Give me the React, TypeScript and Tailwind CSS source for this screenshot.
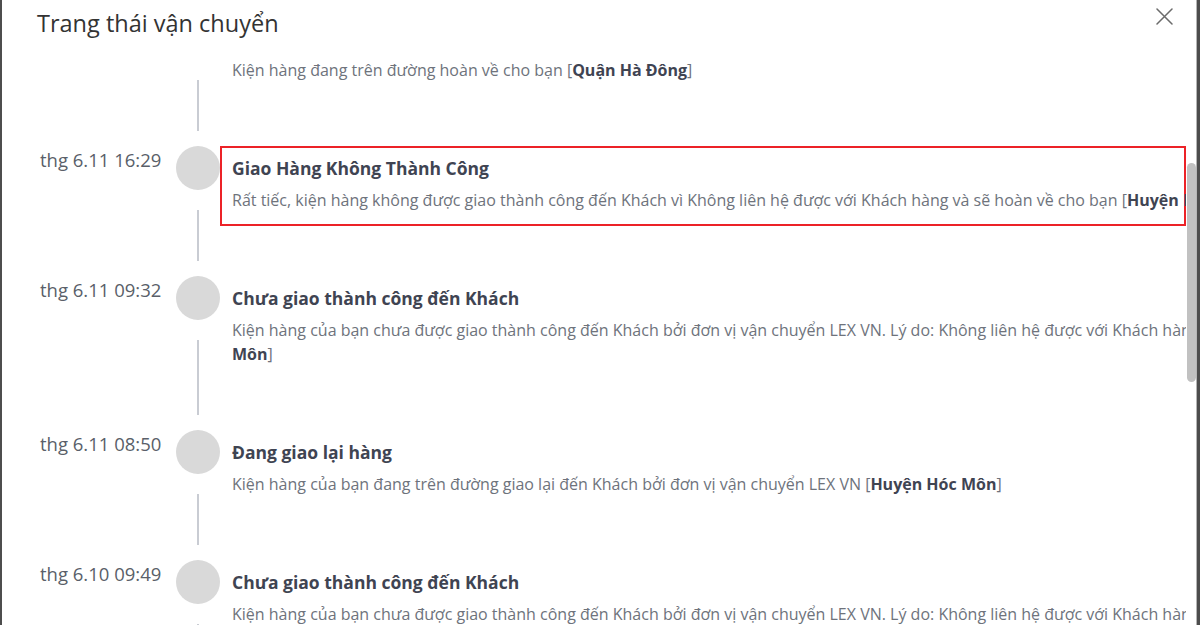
import React from "react";

type Row = {
  date: string;
  title: string;
  lines: React.ReactNode[];
  highlight?: boolean;
};

const B = ({ children }: { children: React.ReactNode }) => (
  <span className="font-bold text-[#3f4452]">{children}</span>
);

const rows: Row[] = [
  {
    date: "\u00a0",
    title: "\u00a0",
    lines: [
      <>
        Kiện hàng đang trên đường hoàn về cho bạn [<B>Quận Hà Đông</B>]
      </>,
    ],
  },
  {
    date: "thg 6.11 16:29",
    title: "Giao Hàng Không Thành Công",
    highlight: true,
    lines: [
      <>
        Rất tiếc, kiện hàng không được giao thành công đến Khách vì Không liên hệ được với Khách hàng và sẽ hoàn về cho bạn [
        <B>Huyện Hóc Môn</B>]
      </>,
    ],
  },
  {
    date: "thg 6.11 09:32",
    title: "Chưa giao thành công đến Khách",
    lines: [
      <>
        Kiện hàng của bạn chưa được giao thành công đến Khách bởi đơn vị vận chuyển LEX VN. Lý do: Không liên hệ được với Khách hàng [
        <B>Huyện Hóc</B>
      </>,
      <>
        <B>Môn</B>]
      </>,
    ],
  },
  {
    date: "thg 6.11 08:50",
    title: "Đang giao lại hàng",
    lines: [
      <>
        Kiện hàng của bạn đang trên đường giao lại đến Khách bởi đơn vị vận chuyển LEX VN [<B>Huyện Hóc Môn</B>]
      </>,
    ],
  },
  {
    date: "thg 6.10 09:49",
    title: "Chưa giao thành công đến Khách",
    lines: [
      <>
        Kiện hàng của bạn chưa được giao thành công đến Khách bởi đơn vị vận chuyển LEX VN. Lý do: Không liên hệ được với Khách hàng [
        <B>Huyện Hóc</B>
      </>,
      <>
        <B>Môn</B>]
      </>,
    ],
  },
];

function TimelineRow({ row }: { row: Row }) {
  return (
    <div className="flex items-stretch pb-[50px] relative">
      <div className="w-[174px] shrink-0 pl-[38px] text-[18.5px] leading-[28px] text-[#5a5f69] whitespace-nowrap">
        {row.date}
      </div>
      <div className="w-[44px] shrink-0 flex flex-col items-center">
        <div className="w-[44px] h-[44px] rounded-full bg-[#d9d9d9] shrink-0" />
      </div>
      <div
        className={
          "w-[966px] shrink-0 border-2 pt-[8px] pl-[10px] pb-[12px] " +
          (row.highlight ? "border-[#ec2227]" : "border-transparent")
        }
      >
        <div className="text-[17.5px] leading-[24px] font-bold text-[#3f4452] whitespace-nowrap">
          {row.title}
        </div>
        <div className="mt-[8px] text-[16px] leading-[24px] text-[#6e737c] whitespace-nowrap">
          {row.lines.map((l, i) => (
            <div key={i}>{l}</div>
          ))}
        </div>
      </div>
      <div className="absolute left-[195px] top-[64px] bottom-[15px] w-[2px] bg-[#c9ccd3]" />
    </div>
  );
}

export default function App() {
  return (
    <div
      className="w-[1200px] h-[625px] bg-[#4d4d4d] flex overflow-hidden"
      style={{ fontFamily: '"Open Sans", "Noto Sans", Arial, sans-serif' }}
    >
      <div className="ml-[2px] w-[1195px] h-full bg-white flex flex-col border-r border-[#b5b5b5]">
        <div className="h-[60px] shrink-0 flex items-start justify-between pl-[35px] pr-[23px]">
          <div className="pt-[6px] text-[23.5px] leading-[34px] text-[#333333] whitespace-nowrap">
            Trang thái vận chuyển
          </div>
          <button className="mt-[7px] w-[18px] h-[18px] flex items-center justify-center">
            <svg width="17" height="17" viewBox="0 0 17 17" fill="none">
              <path d="M1 1L16 16M16 1L1 16" stroke="#6b6b6b" strokeWidth="1.5" strokeLinecap="round" />
            </svg>
          </button>
        </div>
        <div className="flex-1 flex min-h-0">
          <div className="w-[1184px] overflow-hidden">
            <div className="-mt-[44px]">
              {rows.map((r, i) => (
                <TimelineRow key={i} row={r} />
              ))}
            </div>
          </div>
          <div className="flex-1 pt-[103px] flex justify-center">
            <div className="w-[9px] h-[219px] rounded-[5px] bg-[#c1c1c1]" />
          </div>
        </div>
      </div>
    </div>
  );
}
